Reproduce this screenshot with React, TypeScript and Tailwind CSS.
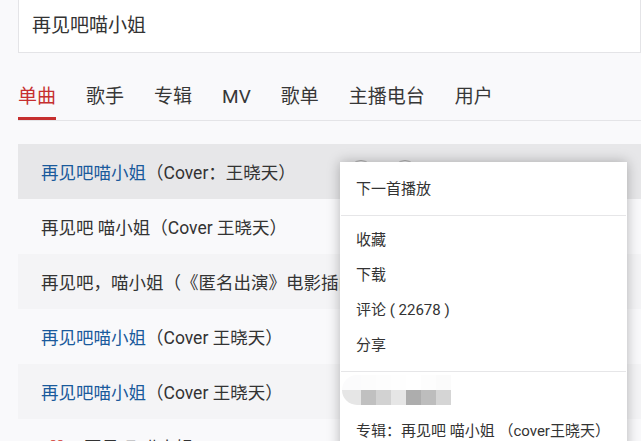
import { type ReactNode } from "react";

const tabs = ["单曲", "歌手", "专辑", "MV", "歌单", "主播电台", "用户"];

const blur = [
  ["bg-[#fbfbfc]", "bg-[#fcfcfc]", "bg-[#fdfdfd]", "bg-[#fefefe]", "bg-white", "bg-[#fdfdfd]", "bg-[#fbfbfb]"],
  ["bg-[#e6e6e6]", "bg-[#c0c0c0]", "bg-[#d2d2d2]", "bg-[#e6e6e6]", "bg-[#adadad]", "bg-[#bdbdbd]", "bg-[#d5d5d5]"],
];

function Row({ shaded, hovered, children }: { shaded?: boolean; hovered?: boolean; children: ReactNode }) {
  return (
    <div
      className={`flex h-[55px] items-center overflow-hidden whitespace-nowrap pl-[23px] pt-1 text-[17.5px] text-[#333] ${
        hovered ? "bg-[#e7e7e9]" : shaded ? "bg-[#f4f4f6]" : ""
      }`}
    >
      {children}
    </div>
  );
}

function MenuItem({ children }: { children: ReactNode }) {
  return <div className="flex h-[35px] items-center whitespace-nowrap pl-4 pt-[2px]">{children}</div>;
}

export default function App() {
  return (
    <div
      className="relative h-[441px] w-[641px] overflow-hidden bg-[#f9f9fb] pl-[18px] [text-spacing-trim:space-all]"
      style={{ fontFamily: 'Roboto, "Noto Sans CJK SC", sans-serif' }}
    >
      <div className="-mt-px flex h-[54px] items-center border border-[#e4e4e7] bg-white pl-[13px] text-[19px] text-[#333]">
        再见吧喵小姐
      </div>

      <div className="mt-[22px] flex h-[46px] border-b border-[#e4e4e7] text-[19px] text-[#373737]">
        {tabs.map((tab, i) => (
          <div
            key={tab}
            className={`mr-[30px] flex h-[45px] items-center whitespace-nowrap border-b-[3px] pt-[2px] ${
              i === 0 ? "border-[#c62f2f] text-[#c62f2f]" : "border-transparent"
            }`}
          >
            {tab}
          </div>
        ))}
      </div>

      <div className="mt-[23px]">
        <Row hovered>
          <span className="text-[#1a5a9c]">再见吧喵小姐</span>（Cover：王晓天）
          <div className="-mt-1 ml-auto mr-[224px] flex shrink-0 gap-5">
            <div className="size-6 rounded-full border border-[#aaa]" />
            <div className="size-6 rounded-full border border-[#aaa]" />
          </div>
        </Row>
        <Row>再见吧 喵小姐（Cover 王晓天）</Row>
        <Row shaded>再见吧，喵小姐（《匿名出演》电影插曲）</Row>
        <Row>
          <span className="text-[#1a5a9c]">再见吧喵小姐</span>（Cover 王晓天）
        </Row>
        <Row shaded>
          <span className="text-[#1a5a9c]">再见吧喵小姐</span>（Cover 王晓天）
        </Row>
        <Row>
          <span className="ml-[7px] mr-[24px] w-[12px] text-[#d33a31]">♡</span>再见吧 喵小姐
        </Row>
      </div>

      <div className="absolute left-[340px] top-[162px] h-[300px] w-[287px] bg-white text-[15px] text-[#333] shadow-[0_0_12px_rgba(0,0,0,0.28)]">
        <div className="pt-[9px]">
          <MenuItem>下一首播放</MenuItem>
        </div>
        <div className="mx-px mt-[9px] h-px bg-[#e6e6e8]" />
        <div className="pt-[6px]">
          <MenuItem>收藏</MenuItem>
          <MenuItem>下载</MenuItem>
          <MenuItem>评论 ( 22678 )</MenuItem>
          <MenuItem>分享</MenuItem>
        </div>
        <div className="mx-px mt-[9px] h-px bg-[#e6e6e8]" />
        <div className="ml-[2px] mt-[3px] w-[109px] overflow-hidden rounded-l-[15px]">
          {blur.map((line, r) => (
            <div key={r} className="flex">
              {line.map((c, i) => (
                <div key={i} className={`h-[15px] ${i === 0 ? "w-[19px]" : "w-[15px]"} ${c}`} />
              ))}
            </div>
          ))}
        </div>
        <div className="mt-2">
          <MenuItem>专辑：再见吧 喵小姐 （cover王晓天）</MenuItem>
        </div>
      </div>
    </div>
  );
}
